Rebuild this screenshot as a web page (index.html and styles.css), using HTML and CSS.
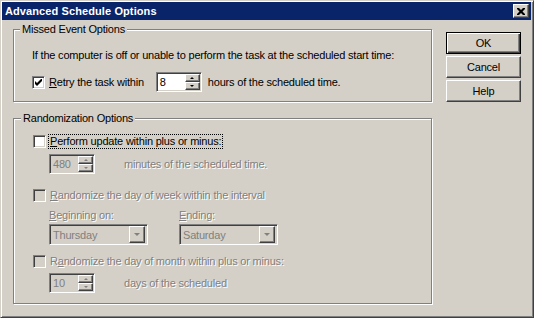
FILE: index.html
```html
<!DOCTYPE html>
<html lang="en">

<head>
    <meta charset="UTF-8">
    <title>Advanced Schedule Options</title>
    <link rel="stylesheet" href="styles.css">
</head>

<body>
    <div class="window">
        <div class="titlebar">
            <span class="title">Advanced Schedule Options</span>
            <span class="close">
                <svg width="8" height="7" viewBox="0 0 8 7"><path d="M0 0h2l2 2 2-2h2v1l-2.5 2.5L8 6v1H6L4 5 2 7H0V6l2.5-2.5L0 1z" fill="#000"/></svg>
            </span>
        </div>

        <div class="client">
            <div class="groups">
                <fieldset class="group missed">
                    <legend>Missed Event Options</legend>
                    <div class="row intro">If the computer is off or unable to perform the task at the scheduled start time:</div>
                    <div class="row retry">
                        <span class="check">
                            <svg width="7" height="7" viewBox="0 0 7 7"><path d="M0 2v3l2 2 5-5V-1L2 4z" fill="#000"/></svg>
                        </span>
                        <span class="check-label"><u>R</u>etry the task within</span>
                        <span class="spin">
                            <span class="spin-value">8</span>
                            <span class="spin-btns"><span class="spin-btn up"></span><span class="spin-btn down"></span></span>
                        </span>
                        <span class="after">hours of the scheduled time.</span>
                    </div>
                </fieldset>

                <fieldset class="group random">
                    <legend>Randomization Options</legend>
                    <div class="row perform">
                        <span class="check"></span>
                        <span class="check-label focus"><u>P</u>erform update within plus or minus:</span>
                    </div>
                    <div class="row sub spin-row">
                        <span class="spin disabled">
                            <span class="spin-value">480</span>
                            <span class="spin-btns"><span class="spin-btn up"></span><span class="spin-btn down"></span></span>
                        </span>
                        <span class="after wide disabled-text">minutes of the scheduled time.</span>
                    </div>
                    <div class="row week">
                        <span class="check disabled"></span>
                        <span class="check-label disabled-text"><u>R</u>andomize the day of week within the interval</span>
                    </div>
                    <div class="row sub labels disabled-text">
                        <span class="col"><u>B</u>eginning on:</span>
                        <span class="col"><u>E</u>nding:</span>
                    </div>
                    <div class="row sub combos">
                        <span class="combo"><span class="combo-value">Thursday</span><span class="combo-btn"></span></span>
                        <span class="combo"><span class="combo-value">Saturday</span><span class="combo-btn"></span></span>
                    </div>
                    <div class="row month">
                        <span class="check disabled"></span>
                        <span class="check-label disabled-text">R<u>a</u>ndomize the day of month within plus or minus:</span>
                    </div>
                    <div class="row sub spin-row last">
                        <span class="spin disabled">
                            <span class="spin-value">10</span>
                            <span class="spin-btns"><span class="spin-btn up"></span><span class="spin-btn down"></span></span>
                        </span>
                        <span class="after wide disabled-text">days of the scheduled</span>
                    </div>
                </fieldset>
            </div>

            <div class="buttons">
                <span class="button default"><span>OK</span></span>
                <span class="button"><span>Cancel</span></span>
                <span class="button"><span>Help</span></span>
            </div>
        </div>
    </div>
</body>

</html>
```

FILE: styles.css
```css
* {
    box-sizing: border-box;
}

body {
    margin: 0;
    background-color: #d4d0c8;
    font-family: "Liberation Sans", Arial, sans-serif;
    font-size: 11px;
    letter-spacing: -0.2px;
    color: #000;
}

.window {
    width: 534px;
    height: 318px;
    background-color: #d4d0c8;
    border: 1px solid;
    border-color: #d4d0c8 #404040 #404040 #d4d0c8;
    box-shadow: inset 1px 1px 0 #fff, inset -1px -1px 0 #808080;
    padding: 1px 2px 2px 1px;
}

.titlebar {
    height: 18px;
    background-color: #0a246a;
    display: flex;
    align-items: center;
    justify-content: space-between;
    padding: 0 2px 0 3px;
}

.title {
    color: #fff;
    font-weight: bold;
    font-size: 11px;
    letter-spacing: 0.1px;
}

.close {
    width: 16px;
    height: 14px;
    display: flex;
    align-items: center;
    justify-content: center;
    background-color: #d4d0c8;
    border: 1px solid;
    border-color: #fff #404040 #404040 #fff;
    box-shadow: inset -1px -1px 0 #808080;
}

.client {
    display: flex;
    gap: 14px;
    padding: 3px 0 0 11px;
}

.groups {
    width: 419px;
}

.group {
    margin: 0;
    padding: 0 0 0 18px;
    border: 1px solid #808080;
    box-shadow: 1px 1px 0 #fff, inset 1px 1px 0 #fff;
}

.group legend {
    padding: 0 2px;
    margin-left: -12px;
    background-color: #d4d0c8;
    line-height: 13px;
}

.missed {
    height: 79px;
}

.random {
    margin-top: 10px;
    height: 192px;
    padding-left: 19px;
}

.row {
    display: flex;
    align-items: center;
    white-space: nowrap;
}

.intro {
    height: 13px;
    margin-top: 12px;
}

.retry {
    height: 20px;
    margin-top: 11px;
}

.check {
    width: 13px;
    height: 13px;
    flex: none;
    display: flex;
    align-items: center;
    justify-content: center;
    background-color: #fff;
    border: 1px solid;
    border-color: #808080 #fff #fff #808080;
    box-shadow: inset 1px 1px 0 #404040, inset -1px -1px 0 #d4d0c8;
}

.check.disabled {
    background-color: #d4d0c8;
}

.check-label {
    margin-left: 4px;
    line-height: 13px;
}

.focus {
    outline: 1px dotted #000;
    outline-offset: 0;
    padding: 0 1px;
    margin-left: 3px;
}

.disabled-text {
    color: #808080;
    text-shadow: 1px 1px 0 #fff;
}

.spin {
    width: 46px;
    height: 20px;
    flex: none;
    display: flex;
    align-items: center;
    justify-content: space-between;
    background-color: #fff;
    border: 1px solid;
    border-color: #808080 #fff #fff #808080;
    box-shadow: inset 1px 1px 0 #404040, inset -1px -1px 0 #d4d0c8;
    padding: 1px 1px 1px 3px;
}

.retry .spin {
    margin-left: 12px;
}

.spin.disabled {
    background-color: #d4d0c8;
    color: #808080;
}

.spin-btns {
    width: 15px;
    height: 16px;
    display: flex;
    flex-direction: column;
}

.spin-btn {
    flex: 1;
    display: flex;
    align-items: center;
    justify-content: center;
    background-color: #d4d0c8;
    border: 1px solid;
    border-color: #fff #404040 #404040 #fff;
    box-shadow: inset -1px -1px 0 #808080;
}

.spin-btn::before {
    content: "";
    border-left: 2px solid transparent;
    border-right: 2px solid transparent;
}

.spin-btn.up::before {
    border-bottom: 2px solid #000;
}

.spin-btn.down::before {
    border-top: 2px solid #000;
}

.spin.disabled .spin-btn.up::before {
    border-bottom-color: #808080;
}

.spin.disabled .spin-btn.down::before {
    border-top-color: #808080;
}

.after {
    margin-left: 6px;
}

.after.wide {
    margin-left: 29px;
}

.sub {
    padding-left: 16px;
}

.perform {
    height: 15px;
    margin-top: 9px;
}

.spin-row {
    height: 20px;
    margin-top: 5px;
}

.week {
    height: 15px;
    margin-top: 14px;
}

.labels {
    height: 13px;
    margin-top: 5px;
}

.col {
    width: 130px;
}

.combos {
    height: 21px;
    margin-top: 3px;
    gap: 31px;
}

.combo {
    width: 99px;
    height: 21px;
    display: flex;
    align-items: center;
    justify-content: space-between;
    background-color: #d4d0c8;
    color: #808080;
    border: 1px solid;
    border-color: #808080 #fff #fff #808080;
    box-shadow: inset 1px 1px 0 #404040, inset -1px -1px 0 #d4d0c8;
    padding: 2px 2px 2px 3px;
}

.combo-btn {
    width: 16px;
    height: 17px;
    display: flex;
    align-items: center;
    justify-content: center;
    border: 1px solid;
    border-color: #fff #404040 #404040 #fff;
    box-shadow: inset -1px -1px 0 #808080;
}

.combo-btn::before {
    content: "";
    border-left: 3px solid transparent;
    border-right: 3px solid transparent;
    border-top: 3px solid #808080;
}

.month {
    height: 15px;
    margin-top: 9px;
}

.last {
    margin-top: 4px;
}

.buttons {
    display: flex;
    flex-direction: column;
    gap: 2px;
    padding-top: 9px;
}

.button {
    width: 75px;
    height: 22px;
    display: flex;
    align-items: center;
    justify-content: center;
    background-color: #d4d0c8;
    border: 1px solid;
    border-color: #fff #404040 #404040 #fff;
    box-shadow: inset -1px -1px 0 #808080;
}

.button.default {
    border: 1px solid #000;
    box-shadow: inset 1px 1px 0 #fff, inset -1px -1px 0 #404040, inset -2px -2px 0 #808080;
}
```
